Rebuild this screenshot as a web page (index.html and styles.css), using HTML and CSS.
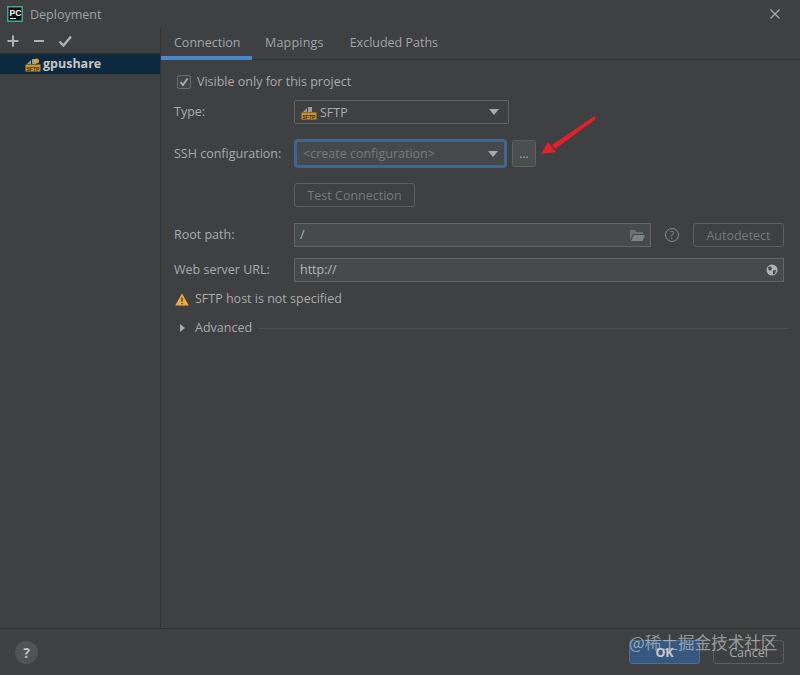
FILE: index.html
```html
<!DOCTYPE html>
<html lang="en">
<head>
    <meta charset="UTF-8">
    <meta name="viewport" content="width=device-width, initial-scale=1.0">
    <title>Deployment</title>
    <link rel="stylesheet" href="styles.css">
</head>
<body>
    <div class="dialog">
        <header class="title-bar">
            <svg class="app-logo" width="16" height="16" viewBox="0 0 16 16">
                <rect x="0.75" y="0.75" width="14.5" height="14.5" fill="#111" stroke="#3fa98f" stroke-width="1.5"/>
                <text x="2.5" y="9.5" class="app-logo-text">PC</text>
                <rect x="3" y="12" width="6" height="1" fill="#fff"/>
            </svg>
            <span class="title-text">Deployment</span>
            <svg class="close-icon" width="12" height="12" viewBox="0 0 12 12">
                <path d="M1.5 1.5L10.5 10.5M10.5 1.5L1.5 10.5" stroke="#a9abad" stroke-width="1.2"/>
            </svg>
        </header>

        <div class="main">
            <aside class="sidebar">
                <div class="toolbar">
                    <svg width="14" height="14" viewBox="0 0 14 14"><path d="M7 1.5V12.5M1.5 7H12.5" stroke="#afb1b3" stroke-width="2"/></svg>
                    <svg width="14" height="14" viewBox="0 0 14 14"><path d="M2 7H12" stroke="#afb1b3" stroke-width="2"/></svg>
                    <svg width="14" height="14" viewBox="0 0 14 14"><path d="M1.5 7.5L5.5 11.5L13 2.5" fill="none" stroke="#afb1b3" stroke-width="2.4"/></svg>
                </div>
                <div class="server-row">
                    <svg width="16" height="16" viewBox="0 0 16 16">
                        <path d="M2 8L6 4V8ZM7 3H11V8H7Z" fill="#9a9c9e"/>
                        <circle cx="11.5" cy="5" r="2.5" fill="#e0a030"/>
                        <rect x="0.5" y="8.5" width="15" height="7" fill="#c8922e"/>
                        <text x="1.5" y="14.5" class="sftp-badge">SFTP</text>
                    </svg>
                    <span class="server-name">gpushare</span>
                </div>
            </aside>

            <section class="content">
                <nav class="tabs">
                    <span class="tab tab-active">Connection</span>
                    <span class="tab tab-mappings">Mappings</span>
                    <span class="tab">Excluded Paths</span>
                </nav>

                <div class="form">
                    <label class="check-row">
                        <span class="checkbox">
                            <svg width="12" height="12" viewBox="0 0 12 12"><path d="M2.5 6L5 9L9.5 2.5" fill="none" stroke="#afb1b3" stroke-width="1.7"/></svg>
                        </span>
                        <span class="text-up">Visible only for this project</span>
                    </label>

                    <div class="row row-type">
                        <span class="label text-up">Type:</span>
                        <div class="field select select-type">
                            <svg width="16" height="16" viewBox="0 0 16 16">
                                <path d="M2 8L6 4V8ZM7 3H11V8H7Z" fill="#9a9c9e"/>
                                <rect x="0.5" y="8.5" width="15" height="7" fill="#c8922e"/>
                                <text x="1.5" y="14.5" class="sftp-badge">SFTP</text>
                            </svg>
                            <span class="select-text">SFTP</span>
                            <span class="caret"></span>
                        </div>
                    </div>

                    <div class="row row-ssh">
                        <span class="label">SSH configuration:</span>
                        <div class="field select select-ssh">
                            <span class="placeholder">&lt;create configuration&gt;</span>
                            <span class="caret"></span>
                        </div>
                        <button class="dots-button">...</button>
                    </div>

                    <div class="row row-test">
                        <span class="label"></span>
                        <button class="button button-test">Test Connection</button>
                    </div>

                    <div class="row row-root">
                        <span class="label text-up">Root path:</span>
                        <div class="field field-root">
                            <span class="field-text text-up">/</span>
                            <svg width="16" height="14" viewBox="0 0 16 14">
                                <path d="M1 12V2H6L7.5 4H14V6H4L1 12Z" fill="#6e7274"/>
                                <path d="M2 13L5 7H16L13.5 13Z" fill="#7f8385"/>
                            </svg>
                        </div>
                        <svg class="help-small" width="16" height="16" viewBox="0 0 16 16">
                            <circle cx="8" cy="8" r="6.5" fill="none" stroke="#8a8d8f" stroke-width="1"/>
                            <text x="8" y="11.5" text-anchor="middle" class="help-small-text">?</text>
                        </svg>
                        <button class="button button-autodetect">Autodetect</button>
                    </div>

                    <div class="row row-url">
                        <span class="label text-up">Web server URL:</span>
                        <div class="field field-url">
                            <span class="field-text text-up">http://</span>
                            <svg width="12" height="12" viewBox="0 0 12 12">
                                <circle cx="6" cy="6" r="5.5" fill="#afb1b3"/>
                                <path d="M2 3L5 2.5L6 5L4 7L2.5 5.5ZM7 6.5L10 6L9 10L7 10.5Z" fill="#45494a"/>
                            </svg>
                        </div>
                    </div>

                    <div class="warning">
                        <svg width="14" height="13" viewBox="0 0 14 13">
                            <path d="M7 0.5L13.8 12.5H0.2Z" fill="#f2a93b"/>
                            <path d="M7 4.5V8.5M7 9.8V11.2" stroke="#3c3f41" stroke-width="1.4"/>
                        </svg>
                        <span class="text-up">SFTP host is not specified</span>
                    </div>

                    <div class="advanced">
                        <span class="arrow-right"></span>
                        <span class="text-up">Advanced</span>
                        <span class="advanced-line"></span>
                    </div>
                </div>

                <svg class="red-arrow" width="60" height="50" viewBox="0 0 60 50">
                    <path d="M54.500 3L56 6L15 36L12 32Z" fill="#e3202c"/>
                    <path d="M1 41L8 29L16 39Z" fill="#e3202c"/>
                </svg>
            </section>
        </div>

        <footer class="footer">
            <span class="help-button">?</span>
            <div class="footer-buttons">
                <button class="button button-ok">OK</button>
                <button class="button button-cancel">Cancel</button>
            </div>
        </footer>

        <div class="watermark">@稀土掘金技术社区</div>
    </div>
</body>
</html>
```

FILE: styles.css
```css
* {
    box-sizing: border-box;
}

html, body {
    margin: 0;
    height: 100%;
}

body {
    background: #3e4041;
    color: #a9abad;
    font-family: "Open Sans", "Noto Sans", sans-serif;
    font-size: 12.5px;
    overflow: hidden;
}

.dialog {
    position: relative;
    display: flex;
    flex-direction: column;
    height: 675px;
}

.title-bar {
    display: flex;
    align-items: center;
    height: 28px;
    padding: 0 19px 0 7px;
    flex: none;
}

.app-logo-text {
    font-family: "Liberation Sans", sans-serif;
    font-size: 8.5px;
    font-weight: bold;
    fill: #fff;
}

.title-text {
    margin-left: 7px;
    color: #a0a2a4;
}

.close-icon {
    margin-left: auto;
}

.main {
    display: flex;
    height: 601px;
    flex: none;
    border-bottom: 1px solid #323232;
}

.sidebar {
    width: 161px;
    flex: none;
    border-right: 1px solid #323232;
}

.toolbar {
    display: flex;
    align-items: center;
    gap: 12px;
    height: 26px;
    padding-left: 6px;
    border-bottom: 1px solid #323232;
}

.server-row {
    display: flex;
    align-items: center;
    gap: 2px;
    height: 20px;
    padding-left: 25px;
    background: #0d293e;
}

.sftp-badge {
    font-family: "Liberation Sans", sans-serif;
    font-size: 5px;
    font-weight: bold;
    fill: #3c2a10;
}

.server-name {
    padding-bottom: 2px;
    color: #c4c6c8;
    font-weight: bold;
}

.content {
    position: relative;
    flex: 1;
}

.tabs {
    display: flex;
    height: 32px;
    border-bottom: 1px solid #323232;
}

.tab {
    height: 32px;
    padding: 6px 13px 0;
    color: #a3a5a7;
}

.tab-active {
    width: 91px;
    padding-right: 0;
    border-bottom: 4px solid #4a88c7;
}

.tab-mappings {
    letter-spacing: 0.2px;
}

.form {
    padding: 14px 16px 0 13px;
}

/* the labels sit a pixel above the centre of their row */
.text-up {
    padding-bottom: 2px;
}

.check-row {
    display: flex;
    align-items: center;
    gap: 6px;
    height: 16px;
    margin-left: 3px;
}

.checkbox {
    display: flex;
    align-items: center;
    justify-content: center;
    width: 14px;
    height: 14px;
    border: 1px solid #6b6b6b;
    border-radius: 2px;
    background: #43474a;
}

.row {
    display: flex;
    align-items: center;
}

.row-type {
    margin-top: 10px;
}

.row-ssh {
    margin-top: 15px;
}

.row-test {
    margin-top: 15px;
}

.row-root {
    margin-top: 16px;
}

.row-url {
    margin-top: 11px;
}

.label {
    width: 120px;
    flex: none;
    color: #a9abad;
}

.field {
    display: flex;
    align-items: center;
    height: 24px;
    border: 1px solid #646464;
    background: #464a4a;
    padding: 0 5px;
}

.field-text {
    flex: 1;
    color: #b4b6b8;
}

.field-root {
    width: 357px;
    padding-right: 5px;
}

.field-url {
    width: 490px;
    padding-right: 5px;
}

.select {
    border-radius: 2px;
    background: #3e4041;
}

.select-type {
    width: 215px;
    padding: 0 9px 0 6px;
}

.select-text {
    flex: 1;
    margin-left: 3px;
}

.select-ssh {
    width: 213px;
    height: 29px;
    padding: 0 6px 0 6px;
    border: 3px solid #3f668e;
    border-radius: 4px;
    background: #45494a;
}

.placeholder {
    flex: 1;
    color: #787a7c;
}

.caret {
    width: 0;
    height: 0;
    border-left: 5px solid transparent;
    border-right: 5px solid transparent;
    border-top: 6px solid #a9abad;
}

.button {
    height: 24px;
    padding: 0;
    border: 1px solid #5e6060;
    border-radius: 3px;
    background: #3e4041;
    color: #777a7c;
    font-family: inherit;
    font-size: 12.5px;
}

.button-test {
    width: 121px;
}

.button-autodetect {
    width: 91px;
    margin-left: 13px;
}

.dots-button {
    width: 24px;
    height: 27px;
    margin-left: 5px;
    padding: 0;
    border: 1px solid #5e6060;
    border-radius: 3px;
    background: #4a4e50;
    color: #b4b6b8;
    font-family: inherit;
    font-size: 12px;
}

.help-small {
    margin-left: 13px;
    flex: none;
}

.help-small-text {
    font-size: 10px;
    fill: #8a8d8f;
}

.warning {
    display: flex;
    align-items: center;
    gap: 6px;
    height: 18px;
    margin: 8px 0 0 1px;
}

.advanced {
    display: flex;
    align-items: center;
    height: 18px;
    margin: 11px -4px 0 6px;
}

.arrow-right {
    width: 0;
    height: 0;
    margin-right: 10px;
    border-top: 4px solid transparent;
    border-bottom: 4px solid transparent;
    border-left: 5px solid #a9abad;
}

.advanced-line {
    flex: 1;
    height: 1px;
    margin-left: 7px;
    background: #4e5052;
}

/* drawn over the form, points at the ... button */
.red-arrow {
    position: absolute;
    left: 379px;
    top: 85px;
}

.footer {
    display: flex;
    align-items: center;
    justify-content: space-between;
    flex: 1;
    padding: 0 16px 0 15px;
}

.help-button {
    display: flex;
    align-items: center;
    justify-content: center;
    width: 23px;
    height: 23px;
    border-radius: 50%;
    background: #505456;
    color: #c0c2c4;
    font-weight: bold;
    font-size: 14px;
}

.footer-buttons {
    display: flex;
    gap: 13px;
}

.button-ok {
    width: 71px;
    height: 24px;
    border-color: #4c708c;
    background: #365880;
    color: #c8cacc;
    font-weight: bold;
}

.button-cancel {
    width: 71px;
    height: 24px;
    color: #a9abad;
}

.watermark {
    position: absolute;
    left: 629px;
    top: 630px;
    color: rgba(200, 202, 204, 0.65);
    font-family: "Noto Sans CJK SC", sans-serif;
    font-size: 16.6px;
    white-space: nowrap;
}
```
